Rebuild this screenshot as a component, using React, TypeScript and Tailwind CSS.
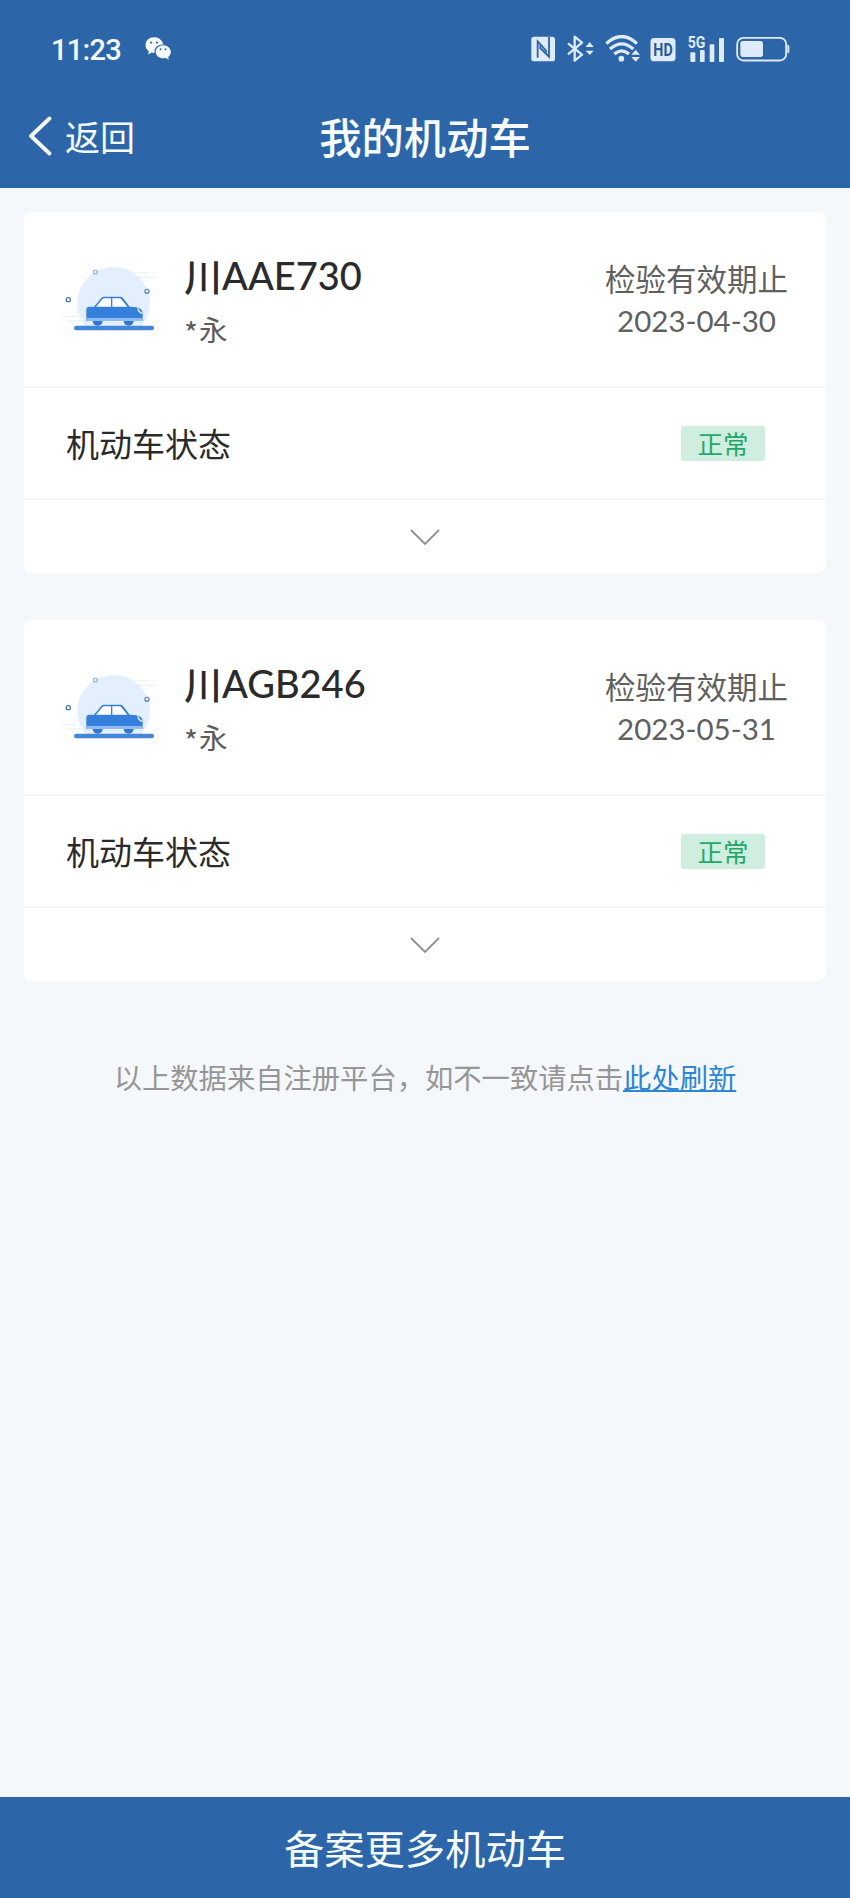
import type { ReactNode } from "react";

interface Vehicle {
	province: string;
	plate: string;
	owner: string;
	expireDate: string;
	status: string;
}

const vehicles: Vehicle[] = [
	{
		province: "川",
		plate: "AAE730",
		owner: "永",
		expireDate: "2023-04-30",
		status: "正常",
	},
	{
		province: "川",
		plate: "AGB246",
		owner: "永",
		expireDate: "2023-05-31",
		status: "正常",
	},
];

const WechatIcon = () => (
	<svg viewBox="0 0 78 70" className="h-[23px] w-[26px]">
		<path
			fill="#f4f9fe"
			d="M27 1C12 1 1 11 1 25c0 8 4 14 10 18l-2 10 11-6c4 1 6 1 9 1-3-14 8-26 26-25C52 9 41 1 27 1z"
		/>
		<path
			fill="#f4f9fe"
			d="M55 25c-13 0-23 9-23 20s10 20 23 20c3 0 6 0 8-1l9 5-2-8c5-4 8-10 8-16 0-11-10-20-23-20z"
		/>
		<g fill="#2c66a9">
			<circle cx="18" cy="17" r="3.4" />
			<circle cx="36" cy="17" r="3.4" />
			<circle cx="47" cy="37" r="3" />
			<circle cx="62" cy="37" r="3" />
		</g>
	</svg>
);

const NfcIcon = () => (
	<svg viewBox="60 45 72 81" className="h-[27px] w-[24px]">
		<rect x="61" y="50" width="71" height="74" rx="8" fill="#dfeafa" />
		<g fill="none" stroke="#2c66a9" strokeWidth="5.5">
			<path d="M80 113V64L105 92V98" />
			<path d="M114 50V110L88 84V76" />
		</g>
	</svg>
);

const BluetoothIcon = () => (
	<svg viewBox="170 45 81 81" className="ml-[12.5px] h-[27px] w-[27px]">
		<path
			d="M173 70 215 104 193 122V50L215 68 173 103"
			fill="none"
			stroke="#dfeafa"
			strokeWidth="7"
			strokeLinejoin="round"
		/>
		<path d="M226 81 238 66 250 81ZM226 92 238 105 250 92Z" fill="#dfeafa" />
	</svg>
);

const WifiIcon = () => (
	<svg viewBox="285 45 108 81" className="ml-[11px] h-[27px] w-[36px]">
		<g fill="none" stroke="#dfeafa" strokeWidth="9.5">
			<path d="M289 71Q335 28 381 71" />
			<path d="M300 87Q335 56 370 87" />
			<path d="M313 102Q335 83 357 102" />
		</g>
		<circle cx="334" cy="116" r="8.5" fill="#dfeafa" />
		<path
			d="M364 104 377 89 390 104ZM364 111 377 125 390 111Z"
			fill="#dfeafa"
		/>
	</svg>
);

const HdIcon = () => (
	<svg
		viewBox="0 45 77 81"
		className="ml-[9px] h-[27px] w-[26px] overflow-visible"
	>
		<rect x="1" y="54" width="75" height="70" rx="11" fill="#dfeafa" />
		<text
			x="38.5"
			y="108"
			textAnchor="middle"
			textLength="58"
			lengthAdjust="spacingAndGlyphs"
			fill="#2c5a94"
			className="font-['Roboto',sans-serif] text-[54px] font-bold"
		>
			HD
		</text>
	</svg>
);

const SignalIcon = () => (
	<svg
		viewBox="113 42 114 84"
		className="ml-[11px] h-[28px] w-[38px] overflow-visible"
	>
		<text
			x="115"
			y="82"
			textLength="53"
			lengthAdjust="spacingAndGlyphs"
			fill="#dfeafa"
			className="font-['Roboto',sans-serif] text-[48px] font-bold"
		>
			5G
		</text>
		<g fill="#dfeafa">
			<rect x="123" y="94" width="15" height="29" rx="3" />
			<rect x="152" y="87" width="14" height="36" rx="3" />
			<rect x="181" y="70" width="14" height="53" rx="3" />
			<rect x="209" y="51" width="15" height="72" rx="3" />
		</g>
	</svg>
);

const BatteryIcon = () => (
	<svg viewBox="260 45 162 81" className="ml-[11px] h-[27px] w-[54px]">
		<rect
			x="263.5"
			y="53.5"
			width="147"
			height="68"
			rx="19"
			fill="none"
			stroke="#dfeafa"
			strokeWidth="5.5"
		/>
		<rect x="273" y="63" width="68" height="48" rx="8" fill="#dfeafa" />
		<path d="M414 74q6 0 6 6v14q0 6-6 6z" fill="#dfeafa" />
	</svg>
);

const CarIllustration = () => (
	<svg viewBox="0 0 360 270" className="mb-2 h-[90px] w-[120px] shrink-0">
		<path d="M106 228A109 109 0 1 1 276 228Z" fill="#e4effd" />
		<g stroke="#e9f1fb" strokeWidth="3">
			<path d="M250 68H298M262 82H320M250 96H290M72 186H100M35 200H80M55 212H95" />
		</g>
		<g fill="#fff" strokeWidth="3.5">
			<circle cx="136" cy="66" r="6" stroke="#8fb0dc" fill="#e4effd" />
			<circle cx="291" cy="124" r="6.2" stroke="#3f79bd" />
			<circle cx="55" cy="149" r="6.2" stroke="#3f6cab" />
		</g>
		<rect x="72" y="227" width="240" height="14" rx="7" fill="#4486d9" />
		<circle cx="143" cy="212" r="15" fill="#2f77cf" />
		<circle cx="236" cy="212" r="15" fill="#2f77cf" />
		<path
			d="M109 179q0-9 9-9h14l22-26q3-4 8-4h48q6 0 9 4l20 26q22 0 33 7 6 4 6 12v23H109z"
			fill="#3580dc"
		/>
		<path
			d="M138 170 157 148q2-3 6-3h20v25zM187 145h21q4 0 6 3l18 22h-45z"
			fill="#fff"
		/>
		<path d="M109 204h169v8q0 1-2 1H113q-4 0-4-4z" fill="#8dbcf3" />
		<path
			d="M264 175q1 11 13 15"
			fill="none"
			stroke="#e4effd"
			strokeWidth="4"
		/>
	</svg>
);

const StatusBar = () => (
	<div className="flex h-[98px] items-center justify-between pr-[60px] pb-px pl-[51px]">
		<div className="flex items-center gap-[24px]">
			<span className="mt-[3px] font-['Roboto',sans-serif] text-[29px] leading-8 font-medium tracking-[-0.7px] text-[#f4f9fe]">
				11:23
			</span>
			<WechatIcon />
		</div>
		<div className="flex items-center">
			<NfcIcon />
			<BluetoothIcon />
			<WifiIcon />
			<HdIcon />
			<SignalIcon />
			<BatteryIcon />
		</div>
	</div>
);

const NavBar = () => (
	<div className="grid h-[90px] grid-cols-[1fr_auto_1fr] items-center pb-[14px] text-[#f6fbff]">
		<button type="button" className="flex items-center pl-[28px]">
			<svg viewBox="0 0 24 40" className="h-[40px] w-[24px]">
				<path
					d="M21.5 2.5 3 20 21.5 37.5"
					fill="none"
					stroke="currentColor"
					strokeWidth="3.8"
					strokeLinecap="round"
					strokeLinejoin="round"
				/>
			</svg>
			<span className="ml-[13px] text-[35px] leading-10">返回</span>
		</button>
		<h1 className="text-[42.3px] leading-[50px] font-medium">我的机动车</h1>
		<span />
	</div>
);

const Row = ({
	className,
	children,
}: {
	className: string;
	children: ReactNode;
}) => (
	<div className={`flex items-center border-b-2 border-[#f3f5f6] ${className}`}>
		{children}
	</div>
);

const VehicleCard = ({ vehicle }: { vehicle: Vehicle }) => (
	<section className="rounded-lg bg-white">
		<Row className="h-[176px] justify-between pr-[38px] pl-[26px]">
			<div className="flex items-center">
				<CarIllustration />
				<div className="ml-[14px] pt-px">
					<h2 className="flex items-center text-[38px] leading-[52px] font-medium text-[#2b2b2b]">
						{vehicle.province}
						<span className="font-['Lato',sans-serif] text-[38px]">
							{vehicle.plate}
						</span>
					</h2>
					<p className="mt-[7px] flex items-center text-[28.5px] leading-[42px] text-[#5c5c5c]">
						<span className="mt-[5px] mr-px text-[30px] leading-none">*</span>
						{vehicle.owner}
					</p>
				</div>
			</div>
			<div className="text-center text-[30.5px] leading-[42px] text-[#606060]">
				<p>检验有效期止</p>
				<p className="pt-px font-['Lato',sans-serif] text-[29.5px] leading-[41px]">
					{vehicle.expireDate}
				</p>
			</div>
		</Row>
		<Row className="h-[112px] justify-between pr-[61px] pl-[42px]">
			<span className="text-[33px] leading-10 text-[#2b2b2b]">机动车状态</span>
			<span className="flex h-[35px] w-[84px] items-center justify-center rounded-[3px] bg-[#cfeee0] text-[25.5px] text-[#22a868]">
				{vehicle.status}
			</span>
		</Row>
		<button
			type="button"
			className="flex h-[73px] w-full items-center justify-center"
		>
			<svg viewBox="0 0 30 16" className="h-[16px] w-[30px]">
				<path
					d="M1 1 15 15 29 1"
					fill="none"
					stroke="#909090"
					strokeWidth="1.8"
				/>
			</svg>
		</button>
	</section>
);

const App = () => {
	return (
		<div className="flex min-h-screen flex-col bg-[#f5f8fa] font-['Noto_Sans_CJK_SC',sans-serif]">
			<header className="bg-[#2c66a9]">
				<StatusBar />
				<NavBar />
			</header>

			<main className="flex-1 px-6 pt-6">
				<div className="flex flex-col gap-[47px]">
					{vehicles.map((vehicle) => (
						<VehicleCard key={vehicle.plate} vehicle={vehicle} />
					))}
				</div>
				<p className="mt-[75px] text-center text-[28.3px] leading-[42px] text-[#969696]">
					以上数据来自注册平台，如不一致请点击
					<a
						href="#refresh"
						className="text-[#2f86d6] underline decoration-2 underline-offset-1"
					>
						此处刷新
					</a>
				</p>
			</main>

			<button
				type="button"
				className="h-[101px] w-full bg-[#2c66a9] text-[40.3px] text-[#f6fbff]"
			>
				备案更多机动车
			</button>
		</div>
	);
};

export default App;
